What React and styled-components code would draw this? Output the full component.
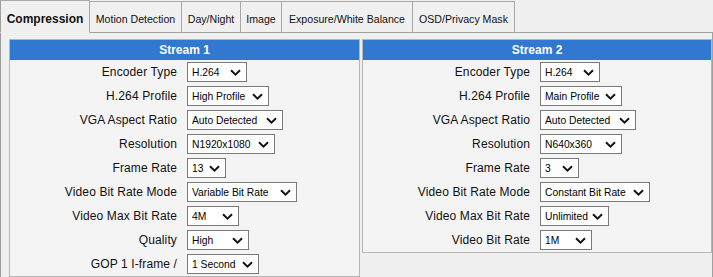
import React from "react";
import styled, { createGlobalStyle } from "styled-components";

const Global = createGlobalStyle`
  html, body { margin: 0; padding: 0; background: #f0f0f0; }
  body { font-family: "Liberation Sans", Arial, sans-serif; color: #000; }
`;

const Page = styled.div`
  width: 713px;
  height: 277px;
  overflow: hidden;
  background: #f0f0f0;
`;

const TabBar = styled.div`
  display: flex;
  align-items: flex-end;
  height: 33px;
`;

const Tab = styled.div`
  box-sizing: border-box;
  flex: none;
  width: ${(p) => p.$w}px;
  height: ${(p) => (p.$active ? 33 : 32)}px;
  display: flex;
  align-items: center;
  justify-content: center;
  padding-top: ${(p) => (p.$active ? 4 : 3)}px;
  font-size: ${(p) => (p.$active ? "12px" : "10.6px")};
  font-weight: ${(p) => (p.$active ? "bold" : "normal")};
  color: #111;
  background: #f0f0f0;
  border-top: 1px solid #a8a8a8;
  border-right: 1px solid #a8a8a8;
  border-left: ${(p) => (p.$first ? "1px solid #a0a0a0" : "none")};
  border-bottom: ${(p) => (p.$active ? "1px solid #f0f0f0" : "1px solid #a0a0a0")};
  white-space: nowrap;
`;

const TabFill = styled.div`
  flex: 1;
  height: 1px;
  background: #a0a0a0;
`;

const Content = styled.div`
  box-sizing: border-box;
  height: 244px;
  border-left: 1px solid #9c9c9c;
  border-right: 1px solid #a0a0a0;
  padding: 6px 0 0 8px;
  display: grid;
  grid-template-columns: 351px 350px;
  column-gap: 2px;
  align-items: start;
`;

const Panel = styled.div`
  border: 1px solid #b6b6b6;
  background: #f4f4f4;
`;

const PanelHeader = styled.div`
  height: 20px;
  background: #3178d1;
  color: #fff;
  font-weight: bold;
  font-size: 12px;
  display: flex;
  align-items: center;
  justify-content: center;
`;

const Rows = styled.div`
  display: grid;
  grid-template-columns: 167px 1fr;
  column-gap: 10px;
  grid-auto-rows: 24px;
  align-items: center;
`;

const Label = styled.div`
  text-align: right;
  font-size: 12px;
  letter-spacing: 0.12px;
  color: #111;
  white-space: nowrap;
`;

const SelectBox = styled.div`
  box-sizing: border-box;
  width: ${(p) => p.$w}px;
  height: 20px;
  border: 1px solid #7a7a7a;
  background: #fff;
  display: flex;
  align-items: center;
  justify-content: space-between;
  padding: 0 5px 0 4px;
  font-size: 10.3px;
  color: #000;
  white-space: nowrap;
`;

const Chevron = () => (
  <svg width="11" height="7" viewBox="0 0 11 7">
    <polyline points="1,1.2 5.5,5.6 10,1.2" fill="none" stroke="#111" strokeWidth="1.9" />
  </svg>
);

const Select = ({ value, w }) => (
  <SelectBox $w={w}>
    <span>{value}</span>
    <Chevron />
  </SelectBox>
);

const stream1 = [
  ["Encoder Type", "H.264", 60],
  ["H.264 Profile", "High Profile", 82],
  ["VGA Aspect Ratio", "Auto Detected", 96],
  ["Resolution", "N1920x1080", 88],
  ["Frame Rate", "13", 39],
  ["Video Bit Rate Mode", "Variable Bit Rate", 110],
  ["Video Max Bit Rate", "4M", 52],
  ["Quality", "High", 62],
  ["GOP 1 I-frame /", "1 Second", 72],
];

const stream2 = [
  ["Encoder Type", "H.264", 60],
  ["H.264 Profile", "Main Profile", 82],
  ["VGA Aspect Ratio", "Auto Detected", 96],
  ["Resolution", "N640x360", 82],
  ["Frame Rate", "3", 39],
  ["Video Bit Rate Mode", "Constant Bit Rate", 110],
  ["Video Max Bit Rate", "Unlimited", 69],
  ["Video Bit Rate", "1M", 52],
];

const tabs = [
  ["Compression", 90],
  ["Motion Detection", 92],
  ["Day/Night", 59],
  ["Image", 41],
  ["Exposure/White Balance", 131],
  ["OSD/Privacy Mask", 102],
];

const StreamPanel = ({ title, rows }) => (
  <Panel>
    <PanelHeader>{title}</PanelHeader>
    <Rows>
      {rows.map(([label, value, w]) => (
        <React.Fragment key={label}>
          <Label>{label}</Label>
          <div>
            <Select value={value} w={w} />
          </div>
        </React.Fragment>
      ))}
    </Rows>
  </Panel>
);

export default function App() {
  return (
    <Page>
      <Global />
      <TabBar>
        {tabs.map(([t, w], i) => (
          <Tab key={t} $w={w} $active={i === 0} $first={i === 0}>
            {t}
          </Tab>
        ))}
        <TabFill />
      </TabBar>
      <Content>
        <StreamPanel title="Stream 1" rows={stream1} />
        <StreamPanel title="Stream 2" rows={stream2} />
      </Content>
    </Page>
  );
}
